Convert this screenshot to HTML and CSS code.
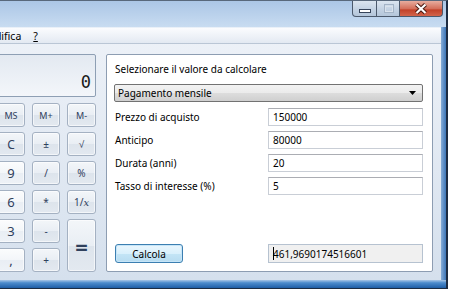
FILE: index.html
```html
<!DOCTYPE html>
<html>
<head>
<meta charset="utf-8">
<link rel="stylesheet" href="styles.css">
</head>
<body>
<div class="window">
  <div class="titlebar">
    <div class="caption">
      <div class="cb cb-min"><svg width="24" height="16" viewBox="0 0 24 16"><rect x="6.5" y="8.5" width="11" height="3" fill="#fff" stroke="#36445a"/></svg></div>
      <div class="cb cb-max"><svg width="23" height="16" viewBox="0 0 23 16"><rect x="7.5" y="3.5" width="9" height="8" fill="none" stroke="#a3b3c6"/><rect x="8.5" y="5.5" width="7" height="5" fill="none" stroke="#d9e2ec"/></svg></div>
      <div class="cb cb-close"><svg width="42" height="16" viewBox="0 0 42 16"><path d="M16.5 3.5 L25.5 12 M25.5 3.5 L16.5 12" stroke="#4a1a12" stroke-width="4.2"/><path d="M16.5 3.5 L25.5 12 M25.5 3.5 L16.5 12" stroke="#fff" stroke-width="2.2"/></svg></div>
    </div>
  </div>
  <div class="body">
    <div class="client">
      <div class="menubar">
        <span class="menu menu-cut">Modifica</span>
        <span class="menu"><u>?</u></span>
      </div>
      <div class="content">
        <div class="calc">
          <div class="display"><span class="digits">0</span></div>
          <div class="keys">
            <div class="key mem">MS</div>
            <div class="key mem">M+</div>
            <div class="key mem">M-</div>
            <div class="key">C</div>
            <div class="key small">±</div>
            <div class="key small">√</div>
            <div class="key num">9</div>
            <div class="key small">/</div>
            <div class="key small">%</div>
            <div class="key num">6</div>
            <div class="key small">*</div>
            <div class="key small">1/<i>x</i></div>
            <div class="key num">3</div>
            <div class="key small">-</div>
            <div class="key eq">=</div>
            <div class="key num">,</div>
            <div class="key small">+</div>
          </div>
        </div>
        <div class="panel">
          <div class="heading">Selezionare il valore da calcolare</div>
          <div class="select"><span>Pagamento mensile</span><svg width="8" height="5" viewBox="0 0 8 5"><path d="M0 0 H7 L3.5 4 Z" fill="#000"/></svg></div>
          <div class="rows">
            <div class="row"><span class="label">Prezzo di acquisto</span><span class="field">150000</span></div>
            <div class="row"><span class="label">Anticipo</span><span class="field">80000</span></div>
            <div class="row"><span class="label">Durata (anni)</span><span class="field">20</span></div>
            <div class="row"><span class="label">Tasso di interesse (%)</span><span class="field">5</span></div>
          </div>
          <div class="actions">
            <div class="btn">Calcola</div>
            <div class="field result"><span class="caret"></span>461,9690174516601</div>
          </div>
        </div>
      </div>
    </div>
    <div class="frame-r"></div>
  </div>
  <div class="frame-b"></div>
</div>
</body>
</html>
```
FILE: styles.css
```css
* { box-sizing: border-box; margin: 0; padding: 0; }
html, body { width: 450px; height: 290px; overflow: hidden; background: #fff; }
body { font-family: "Noto Sans", sans-serif; font-size: 10px; color: #000; }

.window {
  width: 448px; height: 289px;
  display: flex; flex-direction: column;
  border-top: 1px solid #58687c;
  border-right: 2px solid #1d2c42;
  border-bottom: 1px solid #1d2c42;
}

.titlebar {
  height: 26px;
  background: linear-gradient(#abc6e6, #c8dcf1);
  display: flex; justify-content: flex-end;
  padding-right: 3px;
}
.caption { display: flex; height: 16px; }
.cb { height: 16px; border: 1px solid #4b596c; border-top: none; border-left: none; }
.cb svg { display: block; }
.cb-min { width: 25px; border-left: 1px solid #4b596c; border-bottom-left-radius: 4px;
  background: linear-gradient(#dbe5f0, #c3d2e3 55%, #b4c6da); }
.cb-max { width: 23px; background: linear-gradient(#dbe5f0, #c3d2e3 55%, #b4c6da); }
.cb-close { width: 43px; border-bottom-right-radius: 4px;
  background: linear-gradient(#e7ad9f, #d4705c 50%, #c2422a 60%, #d2654c); }

.body { flex: 1; display: flex; }
.client { flex: 1; display: flex; flex-direction: column; background: linear-gradient(#eef2f8, #d5e0ed); }
.frame-r { width: 5px; background: linear-gradient(90deg, #86acd6, #3d76b8); }
.frame-b { height: 8px; background: linear-gradient(#a9c6e6 0, #4d8ccd 35%, #1f5ea6); }

.menubar {
  height: 17px;
  display: flex; align-items: center;
  background: linear-gradient(#fbfcfe, #e3e9f2);
  border-top: 1px solid #e9f0f8;
  border-bottom: 1px solid #bac6d5;
  font-size: 10.5px;
  color: #000;
}
.menu { padding: 0 6px; }
.menu-cut { margin-left: -27px; }

.content { flex: 1; display: flex; gap: 10px; padding: 10px 8px 8px 0; }

.calc { width: 99px; margin-left: -3px; display: flex; flex-direction: column; }
.display {
  height: 43px;
  border: 1px solid #8e9fb4; border-radius: 2px;
  background: linear-gradient(#e3e9f1, #f3f6fa);
  display: flex; justify-content: flex-end; align-items: flex-start;
  padding: 19px 4px 0 0;
}
.digits { font-family: "DejaVu Sans Mono", monospace; font-size: 17px; line-height: 17px; color: #1a1a1a; }

.keys {
  margin-top: 6px;
  display: grid;
  grid-template-columns: 28px 28px 29px;
  grid-template-rows: repeat(6, 24px);
  column-gap: 7px; row-gap: 5px;
}
.key {
  border: 1px solid #a4b1c2; border-radius: 3px;
  background: linear-gradient(#f3f6f9, #e9eef4 50%, #dde4ec 51%, #e3e9f0);
  display: flex; align-items: center; justify-content: center;
  font-size: 12px; color: #2f405c;
  box-shadow: inset 0 0 0 1px rgba(255,255,255,0.6);
}
.key.num { background: linear-gradient(#fbfcfd, #f3f6f9 50%, #e9eef4 51%, #eef2f7); font-size: 13px; }
.key.mem { font-size: 9px; }
.key.small { font-size: 10px; }
.key i { font-family: "DejaVu Serif", serif; font-size: 10px; }
.key.eq { grid-column: 3; grid-row: 5 / span 2; font-size: 22px; font-weight: bold; }

.panel {
  flex: 1;
  background: #fff;
  border: 1px solid #8d9db2; border-radius: 2px;
  padding: 7px 9px 8px 7px;
  display: flex; flex-direction: column;
}
.heading { line-height: 14px; margin-left: 1px; }
.select {
  margin-top: 8px; height: 18px;
  border: 1px solid #727272; border-radius: 2px;
  background: linear-gradient(#f2f2f2, #ebebeb 50%, #dddddd 51%, #cfcfcf);
  display: flex; align-items: center; justify-content: space-between;
  padding: 0 5px 0 3px;
}
.select svg { display: block; }
.rows { margin-top: 6px; display: flex; flex-direction: column; gap: 5px; }
.row { display: flex; align-items: center; height: 18px; }
.label { width: 154px; padding-left: 1px; }
.field {
  flex: 1; height: 18px;
  border: 1px solid #c9ced6; border-top-color: #abadb3;
  background: #fff;
  display: flex; align-items: center; padding-left: 4px;
}
.actions { margin-top: auto; display: flex; align-items: center; height: 19px; }
.btn {
  width: 68px; height: 19px; margin-left: 1px;
  border: 1px solid #3c7fb1; border-radius: 3px;
  background: linear-gradient(#eaf6fd, #d9f0fc 50%, #c4e5f6 51%, #b7dcf1);
  box-shadow: inset 0 0 0 1px #c6e5f8;
  display: flex; align-items: center; justify-content: center;
}
.result {
  flex: none; width: 155px; height: 19px; margin-left: auto;
  background: #f0f0f0; border-color: #b6c2d0;
}
.caret { display: inline-block; width: 1px; height: 13px; background: #000; margin-right: -1px; }
```
